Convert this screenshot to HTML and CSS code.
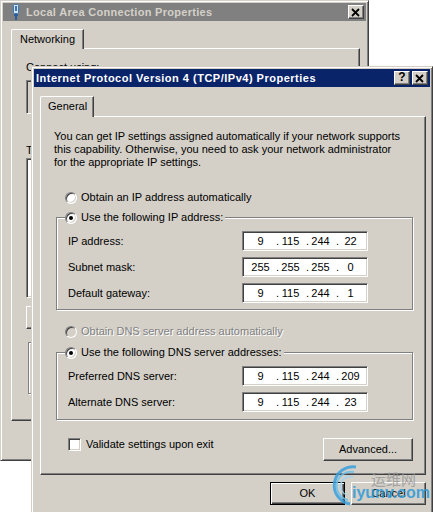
FILE: index.html
```html
<!DOCTYPE html>
<html lang="en">
<head>
  <meta charset="UTF-8">
  <meta name="viewport" content="width=device-width, initial-scale=1.0">
  <title>Internet Protocol Version 4 (TCP/IPv4) Properties</title>
  <link rel="stylesheet" href="styles.css">
</head>
<body>
  <div class="desktop">

    <!-- Back window: Local Area Connection Properties -->
    <div class="window back">
      <div class="titlebar inactive">
        <span class="title-icon">
          <svg width="8" height="16" viewBox="0 0 8 16">
            <rect x="1.5" y="0.5" width="5" height="9" rx="1" fill="#cfe6f7" stroke="#3a78b5"/>
            <rect x="3" y="2" width="2" height="5" fill="#3a78b5"/>
            <rect x="2" y="10" width="4" height="2" fill="#2b5f99"/>
            <rect x="3" y="12" width="2" height="4" fill="#2b5f99"/>
          </svg>
        </span>
        <span class="title-text">Local Area Connection Properties</span>
        <span class="title-btn">
          <svg width="10" height="9" viewBox="0 0 10 9"><path d="M1 1l7 7M8 1l-7 7" stroke="#000" stroke-width="1.8"/></svg>
        </span>
      </div>
      <div class="window-body">
        <div class="tabs"><span class="tab">Networking</span></div>
        <div class="tab-panel back-panel">
          <p class="back-label">Connect using:</p>
          <div class="adapter-box"></div>
          <p class="back-label items-label">This connection uses the following items:</p>
          <div class="list-box"></div>
          <div class="back-buttons">
            <span class="btn">Install...</span>
            <span class="btn">Uninstall</span>
            <span class="btn">Properties</span>
          </div>
          <fieldset class="group desc-group">
            <legend>Description</legend>
          </fieldset>
        </div>
      </div>
    </div>

    <!-- Front dialog: TCP/IPv4 Properties -->
    <div class="window dialog">
      <div class="titlebar">
        <span class="title-text">Internet Protocol Version 4 (TCP/IPv4) Properties</span>
        <span class="title-btn help">?</span>
        <span class="title-btn">
          <svg width="10" height="9" viewBox="0 0 10 9"><path d="M1 1l7 7M8 1l-7 7" stroke="#000" stroke-width="1.8"/></svg>
        </span>
      </div>
      <div class="window-body">
        <div class="tabs"><span class="tab">General</span></div>
        <div class="tab-panel">
          <p class="intro">
            You can get IP settings assigned automatically if your network supports<br>
            this capability. Otherwise, you need to ask your network administrator<br>
            for the appropriate IP settings.
          </p>

          <div class="option first-option">
            <span class="radio"></span>
            <span>Obtain an IP address automatically</span>
          </div>

          <fieldset class="group">
            <legend class="option">
              <span class="radio checked"></span>
              <span>Use the following IP address:</span>
            </legend>
            <div class="field-row">
              <span class="field-label">IP address:</span>
              <div class="ip-field">
                <span class="octet">9</span><span class="dot">.</span><span class="octet">115</span><span class="dot">.</span><span class="octet">244</span><span class="dot">.</span><span class="octet">22</span>
              </div>
            </div>
            <div class="field-row">
              <span class="field-label">Subnet mask:</span>
              <div class="ip-field">
                <span class="octet">255</span><span class="dot">.</span><span class="octet">255</span><span class="dot">.</span><span class="octet">255</span><span class="dot">.</span><span class="octet">0</span>
              </div>
            </div>
            <div class="field-row">
              <span class="field-label">Default gateway:</span>
              <div class="ip-field">
                <span class="octet">9</span><span class="dot">.</span><span class="octet">115</span><span class="dot">.</span><span class="octet">244</span><span class="dot">.</span><span class="octet">1</span>
              </div>
            </div>
          </fieldset>

          <div class="option disabled dns-option">
            <span class="radio"></span>
            <span>Obtain DNS server address automatically</span>
          </div>

          <fieldset class="group dns-group">
            <legend class="option">
              <span class="radio checked"></span>
              <span>Use the following DNS server addresses:</span>
            </legend>
            <div class="field-row">
              <span class="field-label">Preferred DNS server:</span>
              <div class="ip-field">
                <span class="octet">9</span><span class="dot">.</span><span class="octet">115</span><span class="dot">.</span><span class="octet">244</span><span class="dot">.</span><span class="octet">209</span>
              </div>
            </div>
            <div class="field-row">
              <span class="field-label">Alternate DNS server:</span>
              <div class="ip-field">
                <span class="octet">9</span><span class="dot">.</span><span class="octet">115</span><span class="dot">.</span><span class="octet">244</span><span class="dot">.</span><span class="octet">23</span>
              </div>
            </div>
          </fieldset>

          <div class="panel-footer">
            <div class="check-row">
              <span class="checkbox"></span>
              <span>Validate settings upon exit</span>
            </div>
            <span class="btn advanced">Advanced...</span>
          </div>
        </div>

        <div class="dialog-buttons">
          <span class="btn default">OK</span>
          <span class="btn">Cancel</span>
        </div>
      </div>
    </div>

    <!-- Site watermark -->
    <div class="watermark">
      <svg class="swoosh" width="30" height="42" viewBox="0 0 30 42">
        <path d="M26 3 A18 18 0 1 0 20 40" fill="none" stroke="#3aa0dc" stroke-width="3"/>
        <path d="M24 8 A13 13 0 1 0 18 36" fill="none" stroke="#6cc0ec" stroke-width="2"/>
        <path d="M23 13 A8 8 0 1 0 17 31" fill="none" stroke="#9ad6f4" stroke-width="1.5"/>
      </svg>
      <span class="wm-cn">运维网</span>
      <span class="wm-url">iyunv.com</span>
    </div>

  </div>
</body>
</html>
```

FILE: styles.css
```css
/* Global Styles */
* {
  margin: 0;
  padding: 0;
  box-sizing: border-box;
}

body {
  background: #fff;
  font-family: "Liberation Sans", Arial, sans-serif;
  font-size: 11px;
  line-height: 13px;
  color: #000;
}

.desktop {
  position: relative;
  width: 433px;
  height: 512px;
  overflow: hidden;
}

/* Window frame */
.window {
  position: absolute;
  display: flex;
  flex-direction: column;
  background: #d4d0c8;
  border: 1px solid;
  border-color: #d4d0c8 #404040 #404040 #d4d0c8;
  box-shadow: inset 1px 1px #fff, inset -1px -1px #808080;
  padding: 2px;
}

.back {
  left: 0;
  top: 0;
  width: 369px;
  height: 461px;
}

.dialog {
  left: 31px;
  top: 66px;
  width: 402px;
  height: 470px;
}

/* Title bar */
.titlebar {
  display: flex;
  align-items: center;
  height: 18px;
  padding: 0 2px;
  background: #0a246a;
  color: #fff;
  font-weight: bold;
  letter-spacing: 0.5px;
  gap: 2px;
}

.titlebar.inactive {
  background: #808080;
  color: #d4d0c8;
  letter-spacing: 0.3px;
}

.title-icon {
  display: flex;
  margin: 0 4px 0 7px;
}

.title-text {
  flex: 1;
  white-space: nowrap;
}

.title-btn {
  display: flex;
  align-items: center;
  justify-content: center;
  width: 16px;
  height: 14px;
  background: #d4d0c8;
  color: #000;
  border: 1px solid;
  border-color: #fff #404040 #404040 #fff;
  box-shadow: inset -1px -1px #808080;
  font-size: 11px;
  letter-spacing: 0;
}

.title-btn.help {
  font-size: 12px;
  padding-bottom: 1px;
}

/* Tabs */
.window-body {
  display: flex;
  flex-direction: column;
  padding: 9px 4px 0 6px;
}

.back .window-body {
  padding: 8px 6px 0 8px;
}

.tabs {
  display: flex;
  position: relative;
  z-index: 1;
  margin-bottom: -1px;
}

.tab {
  height: 21px;
  padding: 3px 6px 0 7px;
  background: #d4d0c8;
  border: 1px solid;
  border-bottom: none;
  border-color: #fff #404040 #404040 #fff;
  border-top-left-radius: 2px;
  box-shadow: inset -1px 0 #808080;
}

.back .tab {
  height: 20px;
  padding-left: 8px;
  padding-right: 8px;
}

.tab-panel {
  display: flex;
  flex-direction: column;
  border: 1px solid;
  border-color: #fff #404040 #404040 #fff;
  box-shadow: inset -1px -1px #808080;
  padding: 13px 12px 13px 13px;
}

/* Back window panel */
.back-panel {
  height: 373px;
  padding: 12px 14px 0 14px;
}

.adapter-box {
  height: 34px;
  margin-top: 6px;
  border: 1px solid;
  border-color: #808080 #fff #fff #808080;
  box-shadow: inset 1px 1px #404040;
}

.items-label {
  margin-top: 30px;
}

.list-box {
  height: 140px;
  margin-top: 1px;
  background: #fff;
  border: 1px solid;
  border-color: #808080 #fff #fff #808080;
  box-shadow: inset 1px 1px #404040, inset -1px -1px #d4d0c8;
}

.back-buttons {
  display: flex;
  gap: 8px;
  margin-top: 8px;
}

.back-buttons .btn {
  width: 90px;
}

.desc-group {
  height: 58px;
  margin-top: 4px;
}

/* Intro text */
.intro {
  white-space: nowrap;
}

/* Radio options */
.option {
  display: flex;
  align-items: center;
  gap: 4px;
  height: 13px;
  white-space: nowrap;
}

.first-option {
  margin: 22px 0 0 11px;
}

.radio {
  position: relative;
  width: 12px;
  height: 12px;
  border-radius: 50%;
  background: #fff;
  border: 1px solid;
  border-color: #808080 #fff #fff #808080;
  box-shadow: inset 1px 1px #404040, inset -1px -1px #d4d0c8;
}

.radio.checked::after {
  content: "";
  position: absolute;
  left: 3px;
  top: 3px;
  width: 4px;
  height: 4px;
  border-radius: 50%;
  background: #000;
}

.option.disabled {
  color: #808080;
  text-shadow: 1px 1px #fff;
}

.option.disabled .radio {
  background: #d4d0c8;
}

.dns-option {
  margin: 15px 0 0 11px;
}

/* Group boxes */
.group {
  margin: 7px 0 0 2px;
  border: 1px solid #808080;
  box-shadow: inset 1px 1px #fff, 1px 1px #fff;
  padding: 7px 0 6px 11px;
}

.group legend {
  margin-left: -3px;
  padding-right: 2px;
  background: #d4d0c8;
}

.desc-group legend {
  padding: 0 2px;
}

.dns-group {
  margin-top: 8px;
  padding-bottom: 7px;
}

.field-row {
  display: flex;
  align-items: center;
  height: 20px;
}

.field-row + .field-row {
  margin-top: 6px;
}

.field-label {
  width: 174px;
  white-space: nowrap;
}

/* IP address control */
.ip-field {
  display: flex;
  align-items: center;
  width: 126px;
  height: 20px;
  padding-left: 6px;
  background: #fff;
  border: 1px solid;
  border-color: #808080 #fff #fff #808080;
  box-shadow: inset 1px 1px #404040, inset -1px -1px #d4d0c8;
}

.octet {
  width: 23px;
  text-align: center;
}

.dot {
  width: 7px;
  text-align: right;
}

/* Footer of the panel */
.panel-footer {
  display: flex;
  justify-content: space-between;
  align-items: flex-start;
  margin-top: 17px;
}

.check-row {
  display: flex;
  align-items: center;
  gap: 5px;
  margin: 1px 0 0 14px;
}

.checkbox {
  width: 13px;
  height: 13px;
  background: #fff;
  border: 1px solid;
  border-color: #808080 #fff #fff #808080;
  box-shadow: inset 1px 1px #404040, inset -1px -1px #d4d0c8;
}

/* Buttons */
.btn {
  display: flex;
  align-items: center;
  justify-content: center;
  height: 23px;
  background: #d4d0c8;
  border: 1px solid;
  border-color: #fff #404040 #404040 #fff;
  box-shadow: inset -1px -1px #808080;
}

.btn.default {
  border-color: #000;
  box-shadow: inset 1px 1px #fff, inset -1px -1px #404040, inset -2px -2px #808080;
}

.advanced {
  width: 90px;
  margin-top: 1px;
}

.dialog-buttons {
  display: flex;
  justify-content: flex-end;
  gap: 6px;
  margin-top: 7px;
}

.dialog-buttons .btn {
  width: 75px;
}

/* Watermark */
.watermark {
  position: absolute;
  left: 330px;
  top: 464px;
  width: 100px;
  height: 44px;
  opacity: 0.85;
}

.swoosh {
  position: absolute;
  left: 0;
  top: 0;
}

.wm-cn {
  position: absolute;
  left: 41px;
  top: 7px;
  font-family: "Noto Sans CJK SC", sans-serif;
  font-size: 15px;
  line-height: 15px;
  color: #9a9a9a;
}

.wm-url {
  position: absolute;
  left: 22px;
  top: 21px;
  font-size: 16px;
  line-height: 16px;
  font-weight: bold;
  color: #2d9ad8;
}
```
